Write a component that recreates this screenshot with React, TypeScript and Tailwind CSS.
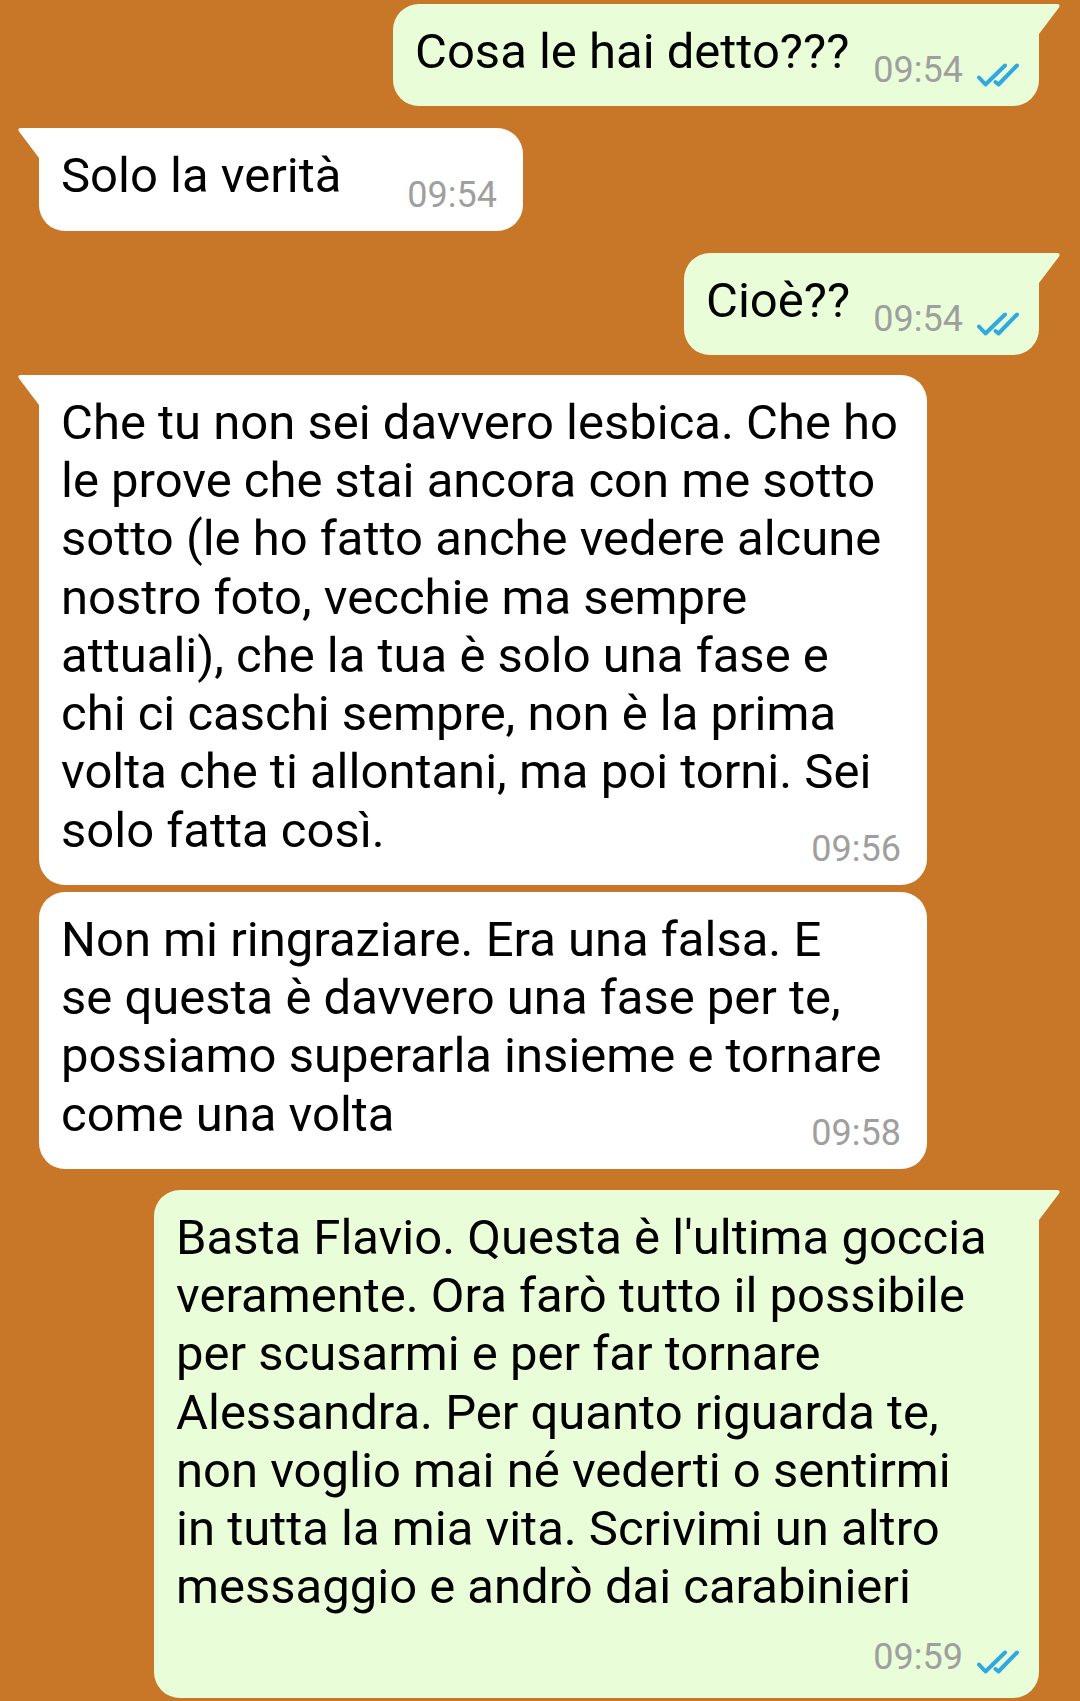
import React from "react";

const FONT = { fontFamily: "Roboto, 'Noto Sans', sans-serif" };

function Ticks() {
  return (
    <svg width="42" height="24" viewBox="0 0 42 24" className="shrink-0 block">
      <polyline points="2,14.5 8.5,21.5 28,2.5" fill="none" stroke="#2fa9e0" strokeWidth="4" strokeLinecap="round" strokeLinejoin="round" />
      <polyline points="18.5,19 21.5,21.5 40,2.5" fill="none" stroke="#2fa9e0" strokeWidth="4" strokeLinecap="round" strokeLinejoin="round" />
    </svg>
  );
}

function Time({ t, out }: { t: string; out?: boolean }) {
  return (
    <div className="flex items-end gap-[14px] shrink-0 relative top-[1px]">
      <span className="text-[36px] leading-[24px] text-[#9f9f9f]">{t}</span>
      {out && (
        <span className="relative top-[5px]">
          <Ticks />
        </span>
      )}
    </div>
  );
}

function OutTail() {
  return (
    <svg className="absolute top-0 left-full" width="22" height="30" viewBox="0 0 22 30">
      <path d="M0,0 H18 Q22,0 20,3.5 L0,30 Z" fill="#e8fdd8" />
    </svg>
  );
}

function InTail() {
  return (
    <svg className="absolute top-0 right-full" width="22" height="30" viewBox="0 0 22 30">
      <path d="M22,0 H4 Q0,0 2,3.5 L22,30 Z" fill="#ffffff" />
    </svg>
  );
}

type BubbleProps = {
  lines: string[];
  time: string;
  out?: boolean;
  tail?: boolean;
  width: number;
  sepTime?: boolean;
};

function Bubble({ lines, time, out, tail, width, sepTime }: BubbleProps) {
  const last = lines[lines.length - 1];
  const head = lines.slice(0, -1);
  return (
    <div
      className={
        "relative pt-[19px] pl-[22px] " +
        (out ? "bg-[#e8fdd8] pr-[20px] " : "bg-white pr-[26px] ") +
        (sepTime ? "pb-[30px] " : "pb-[25px] ") +
        (tail ? (out ? "rounded-[26px] rounded-tr-none" : "rounded-[26px] rounded-tl-none") : "rounded-[26px]")
      }
      style={{ width }}
    >
      {tail && (out ? <OutTail /> : <InTail />)}
      {head.map((l, i) => (
        <div key={i} className="text-[49px] leading-[58.25px] text-black whitespace-nowrap">
          {l}
        </div>
      ))}
      {sepTime ? (
        <>
          <div className="text-[49px] leading-[58.25px] text-black whitespace-nowrap">{last}</div>
          <div className="flex justify-end mt-[27px]">
            <Time t={time} out={out} />
          </div>
        </>
      ) : (
        <div className="flex items-end justify-between">
          <div className="text-[49px] leading-[58.25px] text-black whitespace-nowrap">{last}</div>
          <Time t={time} out={out} />
        </div>
      )}
    </div>
  );
}

export default function App() {
  return (
    <div className="w-[1080px] h-[1701px] bg-[#c87627] overflow-hidden pt-[4px]" style={FONT}>
      <div className="flex justify-end pr-[41px]">
        <Bubble out tail width={646} time="09:54" lines={["Cosa le hai detto???"]} />
      </div>
      <div className="flex justify-start pl-[39px] mt-[22px]">
        <Bubble tail width={484} time="09:54" lines={["Solo la verità"]} />
      </div>
      <div className="flex justify-end pr-[41px] mt-[22px]">
        <Bubble out tail width={355} time="09:54" lines={["Cioè??"]} />
      </div>
      <div className="flex justify-start pl-[39px] mt-[20px]">
        <Bubble
          tail
          width={888}
          time="09:56"
          lines={[
            "Che tu non sei davvero lesbica. Che ho",
            "le prove che stai ancora con me sotto",
            "sotto (le ho fatto anche vedere alcune",
            "nostro foto, vecchie ma sempre",
            "attuali), che la tua è solo una fase e",
            "chi ci caschi sempre, non è la prima",
            "volta che ti allontani, ma poi torni. Sei",
            "solo fatta così.",
          ]}
        />
      </div>
      <div className="flex justify-start pl-[39px] mt-[7px]">
        <Bubble
          width={888}
          time="09:58"
          lines={[
            "Non mi ringraziare. Era una falsa. E",
            "se questa è davvero una fase per te,",
            "possiamo superarla insieme e tornare",
            "come una volta",
          ]}
        />
      </div>
      <div className="flex justify-end pr-[41px] mt-[21px]">
        <Bubble
          out
          tail
          sepTime
          width={885}
          time="09:59"
          lines={[
            "Basta Flavio. Questa è l'ultima goccia",
            "veramente. Ora farò tutto il possibile",
            "per scusarmi e per far tornare",
            "Alessandra. Per quanto riguarda te,",
            "non voglio mai né vederti o sentirmi",
            "in tutta la mia vita. Scrivimi un altro",
            "messaggio e andrò dai carabinieri",
          ]}
        />
      </div>
    </div>
  );
}
